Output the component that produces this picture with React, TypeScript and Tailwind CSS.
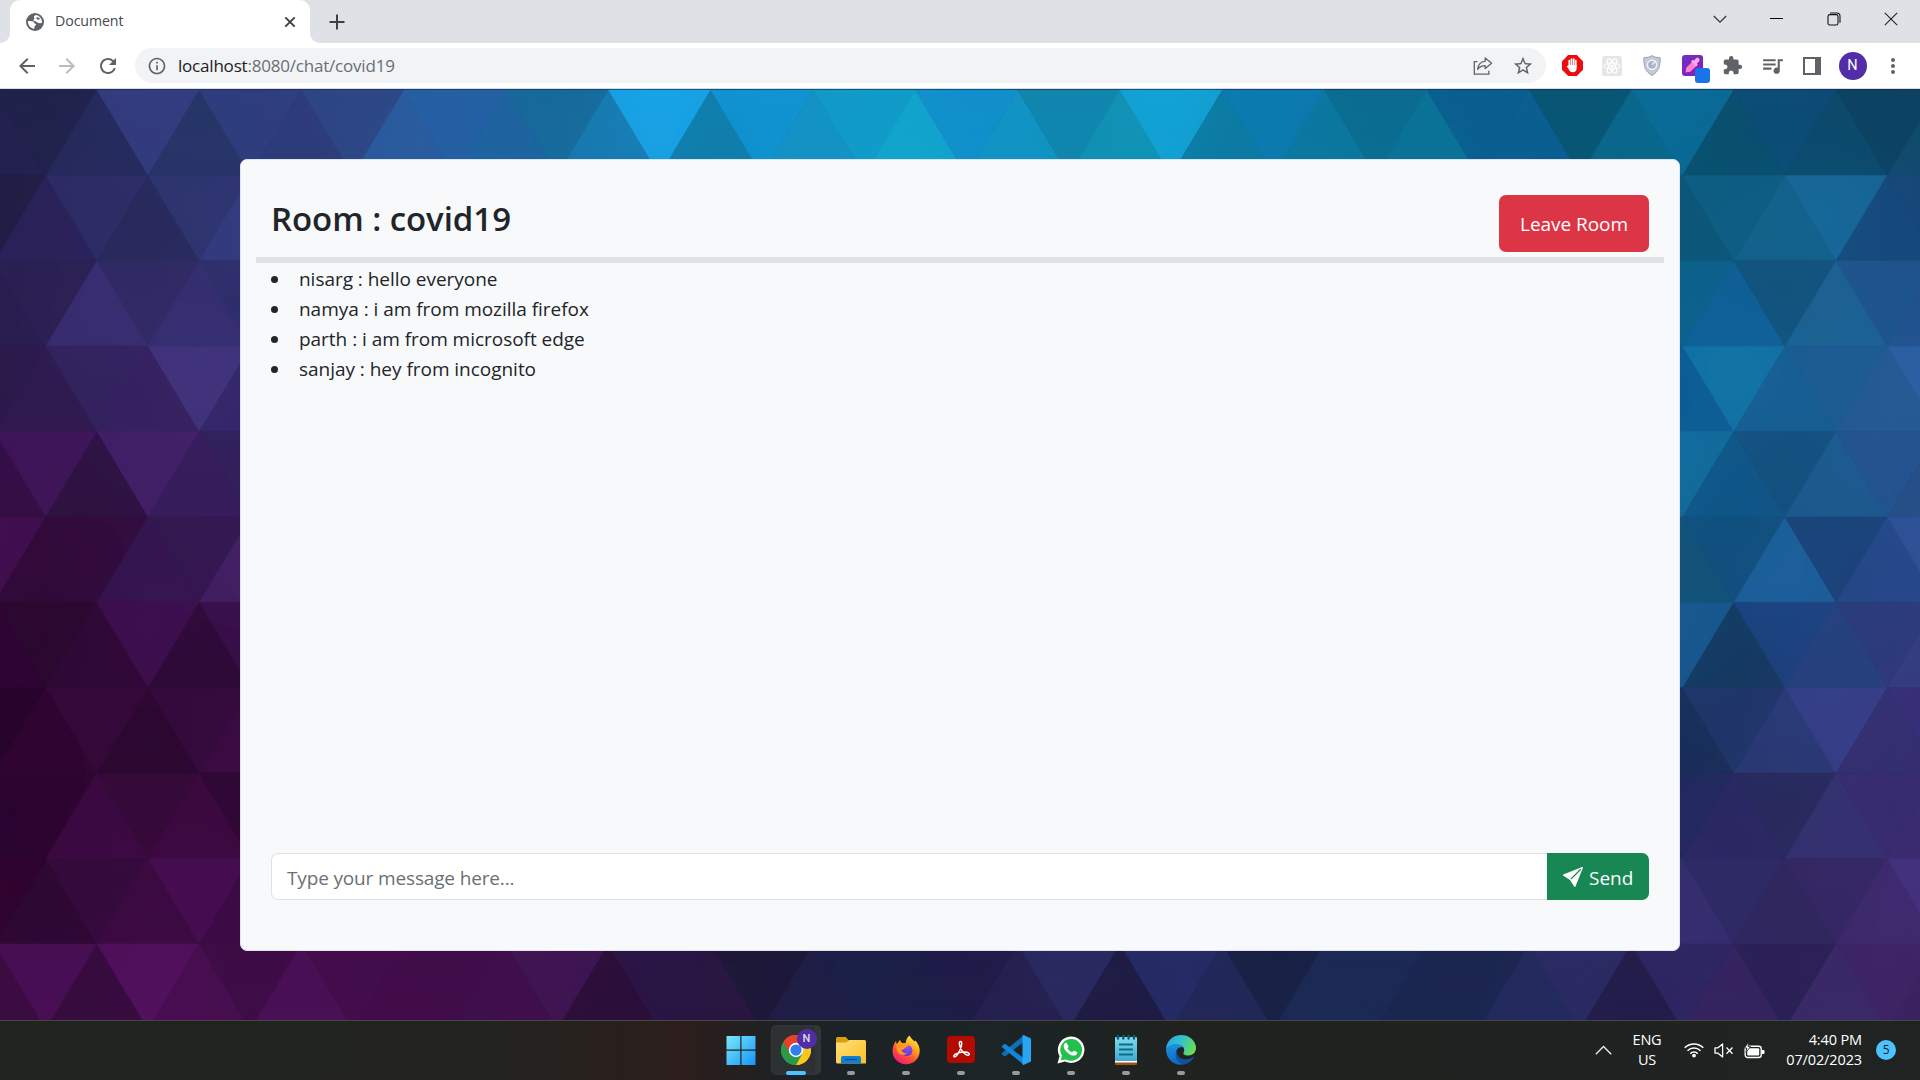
import React from "react";
import {
  MdArrowBack,
  MdArrowForward,
  MdRefresh,
  MdStarBorder,
  MdExtension,
  MdQueueMusic,
  MdMoreVert,
  MdInfoOutline,
} from "react-icons/md";
import { BsSendFill } from "react-icons/bs";

const FONT = "font-['Segoe_UI','Open_Sans','Noto_Sans',sans-serif]";

/* ---------- Triangle wallpaper ---------- */

const STEP_X = 51.15;
const ROW_H = 85.4;

type Run = { row: number; from: number; colors: string };

const RUNS: Run[] = [
  {
    row: 0,
    from: -1,
    colors:
      "23214f 20224b 252a5c 343d80 263466 2f3e7e 2e3b7a 2d4685 2a5c9f 2560a4 1f64a0 176a9b 177ab0 18a4e8 107ca8 1193d2 1592c4 119bc8 12a5cd 118fcc 1294c4 1085ad 1192b4 12a3d5 0c7aa2 0b7ab0 0b78a0 0a6c90 0a7398 085f90 0a5f92 075573 09688c 096c99 084e6c 0b4c76 0c4a6c 0c4261 114c6e",
  },
  { row: 1, from: -1, colors: "201d44 2a2259 2e2d68 28295b 2e3570 343d80 343d80" },
  { row: 1, from: 31, colors: "0d5c80 0b5678 0e5e85 13638c 166a9c 17487b 16477a" },
  { row: 2, from: -1, colors: "291d50 2b2052 3a2e74 302b64 352f72 2f2f6c 2f2f6c" },
  { row: 2, from: 31, colors: "0c628c 0c628c 10609a 12527c 1c6394 1f548c 22528f" },
  { row: 3, from: -1, colors: "2c1a4b 2f1a4d 33235f 36205f 42357f 33286a 33286a" },
  { row: 3, from: 31, colors: "0c5c94 0c5c94 1276a8 165f94 1c5c92 255a94 2c60a5" },
  { row: 4, from: -1, colors: "340f45 40155a 2c123f 43206a 371c5c 30205a 30205a" },
  { row: 4, from: 31, colors: "126e9e 126e9e 105688 14507e 1d5c90 245490 264e86" },
  { row: 5, from: -1, colors: "420f50 300a38 320b3c 361551 33184f 452066 452066" },
  { row: 5, from: 31, colors: "125278 125278 114f7e 1d629e 1a4278 25488a 305298" },
  { row: 6, from: -1, colors: "2e0634 2b072e 2f0837 3f0f50 2d0a37 380f4a 380f4a" },
  { row: 6, from: 31, colors: "195a92 195a92 14395f 1c4280 26427e 2d3a7a 353e80" },
  { row: 7, from: -1, colors: "27062b 300630 35093a 2b0730 350a3d 3b0b42 3b0b42" },
  { row: 7, from: 31, colors: "182f58 182f58 20366a 2a3a76 36408a 342f70 372e78" },
  { row: 8, from: -1, colors: "2a0630 2c062f 3d0943 350838 3d0940 2e0735 2e0735" },
  { row: 8, from: 31, colors: "22295e 22295e 2c2864 282a5c 353272 382c70 3a2c70" },
  { row: 9, from: -1, colors: "30052f 2c0731 340a3c 3b0a40 470d52 3b0b44 3b0b44" },
  { row: 9, from: 31, colors: "352e70 352e70 2d2b66 30285f 352863 3e2b6e 45327f" },
  {
    row: 10,
    from: -1,
    colors:
      "3a0b40 4a0f56 350b3c 53115f 470d50 3d0c45 4a1056 430d4c 420c4a 400d4a 3f0f4c 3f1653 2b0f38 2a1646 2a1642 1d1838 1f1e46 1b2048 1d1f47 1f1c48 25204f 2a2a62 1e1b42 252c66 222858 182044 1c2a56 1b2a55 1a2650 1b2650 232a5e 2c2b64 221c48 2e2663 35245f 2a2055 3b2a68 3e2565 3a2360",
  },
];

function triangles() {
  return RUNS.flatMap((run) =>
    run.colors.split(" ").map((c, n) => {
      const j = run.from + n;
      const cx = 45.9 + STEP_X * j;
      const top = 1 + ROW_H * run.row;
      const bottom = top + ROW_H;
      const down = (run.row + j) % 2 === 0;
      const base = down ? top : bottom;
      const tip = down ? bottom : top;
      return (
        <polygon
          key={`${run.row}:${j}`}
          points={`${cx - STEP_X},${base} ${cx + STEP_X},${base} ${cx},${tip}`}
          fill={`#${c}`}
          stroke={`#${c}`}
          strokeWidth="0.6"
        />
      );
    })
  );
}

function Wallpaper() {
  return (
    <svg className="absolute inset-0 h-full w-full" viewBox="0 0 1920 931" preserveAspectRatio="none">
      <defs>
        <filter id="soft" x="-5%" y="-5%" width="110%" height="110%">
          <feGaussianBlur stdDeviation="30" />
        </filter>
      </defs>
      <rect width="1920" height="931" fill="#1c2a56" />
      <g>{triangles()}</g>
      <g filter="url(#soft)" opacity="0.22">
        {triangles()}
      </g>
    </svg>
  );
}

/* ---------- Browser chrome ---------- */

function Cell({ children, className = "w-10" }: { children: React.ReactNode; className?: string }) {
  return <div className={`flex h-full shrink-0 items-center justify-center ${className}`}>{children}</div>;
}

function GlobeIcon() {
  return (
    <svg className="size-[18px]" viewBox="0 0 18 18">
      <circle cx="9" cy="9" r="9" fill="#5f6368" />
      <path
        d="M1.900 8.300c1.800-.5 4-.4 5.300.3 1 .6.7 1.500 1.500 2 .8.500 1.500.3 1.400 1.100-.1.900-1.400.8-1.600 1.700-.2.900-.1 1.700-.3 2.500C4.500 15.600 1.800 12.300 1.900 8.300z"
        fill="#fff"
      />
      <path
        d="M9.700 2c-.8.700-1.800 1-1.800 1.900 0 .8.700.9.600 1.600-.1.700-1 .9-1 1.700 0 .9 1 .9 1.900 1 1 .1 1 1.200 2 1.400 1.200.200 1.600.8 2.700.7.700 0 1.300-.4 2-.5.100-4-2.500-7.300-6.400-7.800z"
        fill="#fff"
      />
      <path d="M10.500 4.200c1.400-.2 2.900.5 3.600 1.700-.8.400-1.500.9-2.500.7-.9-.3-1.500-1.300-1.100-2.400z" fill="#5f6368" />
    </svg>
  );
}

function TabStrip() {
  return (
    <div className="flex h-[43px] bg-[#dee1e6]">
      <div className="w-[10px] bg-white">
        <div className="h-full rounded-br-[10px] bg-[#dee1e6]" />
      </div>
      <div className="flex w-[300px] items-center rounded-t-[10px] bg-white pl-[16px] pr-[13px]">
        <GlobeIcon />
        <span className="ml-[11px] mt-[-2px] flex-1 text-[14.2px] tracking-[-0.1px] text-[#45494d]">Document</span>
        <svg className="size-[14px]" viewBox="0 0 14 14" stroke="#3c4043" strokeWidth="1.9">
          <path d="M2.3 2.3l9.4 9.4M11.7 2.3L2.3 11.7" />
        </svg>
      </div>
      <div className="w-[10px] bg-white">
        <div className="h-full rounded-bl-[10px] bg-[#dee1e6]" />
      </div>
      <div className="flex w-[34px] items-center justify-center">
        <svg className="size-[16px]" viewBox="0 0 16 16" stroke="#3c4043" strokeWidth="2">
          <path d="M8 .5v15M.5 8h15" />
        </svg>
      </div>
      <div className="flex-1" />
      <div className="flex h-[37px] items-center">
        <Cell className="w-[57px]">
          <svg className="size-[14px]" viewBox="0 0 14 14" fill="none" stroke="#333" strokeWidth="1.2">
            <path d="M.8 4l6.2 6.2L13.2 4" />
          </svg>
        </Cell>
        <Cell className="w-[57px]">
          <div className="h-px w-[13px] bg-black" />
        </Cell>
        <Cell className="w-[57px]">
          <svg className="size-[14px]" viewBox="0 0 14 14" fill="none" stroke="#111" strokeWidth="1.1">
            <rect x="1" y="2.6" width="10" height="10.4" rx="1.8" />
            <path d="M3 1h6.8a3.2 3.2 0 0 1 3.2 3.2v6.6" />
          </svg>
        </Cell>
        <Cell className="w-[58px]">
          <svg className="size-[14px]" viewBox="0 0 14 14" stroke="#222" strokeWidth="1.1">
            <path d="M.8.8l12.4 12.4M13.2.8L.8 13.2" />
          </svg>
        </Cell>
      </div>
    </div>
  );
}

function Toolbar() {
  return (
    <div className="flex h-[45px] items-center bg-white pl-[7px] pr-[7px]">
      <Cell><MdArrowBack className="size-[24px] text-[#5f6368]" /></Cell>
      <Cell><MdArrowForward className="size-[24px] text-[#babcbe]" /></Cell>
      <Cell><MdRefresh className="ml-[1px] size-[24px] text-[#5f6368]" /></Cell>
      <div className="ml-2 mr-[7px] flex h-[35px] flex-1 items-center rounded-full bg-[#f1f3f4] pr-[3px]">
        <Cell className="w-[43px]"><MdInfoOutline className="ml-[1px] size-[20px] text-[#5f6368]" /></Cell>
        <span className="flex-1 text-[17px] tracking-[-0.2px] text-[#6a6e72]">
          <span className="text-[#202124]">localhost</span>:8080/chat/covid19
        </span>
        <Cell>
          <svg className="size-[20px]" viewBox="0 0 20 20" fill="none" stroke="#5f6368" strokeWidth="1.3">
            <path d="M4.4 5.6H1.3v12.6h14.5v-3.4" />
            <path d="M12.2 2l6.4 5.2-6.4 5.3V9.6c-3.2 0-5.6 1-7.6 3.8.5-4.300 2.600-7.600 7.600-8.300z" strokeLinejoin="round" />
          </svg>
        </Cell>
        <Cell><MdStarBorder className="size-[22px] text-[#5f6368]" /></Cell>
      </div>
      <Cell className="w-[39px]">
        <svg className="size-[21px]" viewBox="0 0 21 21">
          <path d="M6.200 0h8.600L21 6.200v8.600L14.800 21H6.200L0 14.800V6.200z" fill="#ec0d10" />
          <g stroke="#fff" strokeWidth="1.700" strokeLinecap="round">
            <path d="M7.300 11V5.700M9.500 10V4.200M11.700 10V4.200M13.800 11V5.700" />
          </g>
          <path d="M6.450 10h8.200v3.200c0 2.400-1.500 4.100-3.800 4.100-1.900 0-3-.8-3.700-2.200L4.700 11.200c.5-.8 1.300-.6 1.750 0z" fill="#fff" />
        </svg>
      </Cell>
      <Cell>
        <svg className="size-[20px]" viewBox="0 0 20 20" fill="none">
          <rect width="20" height="20" rx="2" fill="#e6e6e6" />
          <g stroke="#fff" strokeWidth="1">
            <ellipse cx="10" cy="10" rx="8" ry="3" />
            <ellipse cx="10" cy="10" rx="8" ry="3" transform="rotate(60 10 10)" />
            <ellipse cx="10" cy="10" rx="8" ry="3" transform="rotate(120 10 10)" />
          </g>
          <circle cx="10" cy="10" r="1.600" fill="#fff" />
        </svg>
      </Cell>
      <Cell>
        <svg className="h-[21px] w-[18px]" viewBox="0 0 18 21">
          <path d="M9 .6c2.300 1.500 5.200 2.100 8.200 2.200.3 8.200-1.600 14.200-8.200 17.600C2.400 17 .5 11 .8 2.800 3.800 2.700 6.700 2.100 9 .6z" fill="#c3cad6" stroke="#98a4b6" />
          <circle cx="9" cy="9.800" r="4.600" fill="#a9b4c6" stroke="#eef1f6" strokeWidth="1.500" />
          <path d="M9 9.800l3.500-3.500" stroke="#eef1f6" strokeWidth="1.500" />
        </svg>
      </Cell>
      <Cell>
        <div className="relative size-[21px]">
          <svg className="size-[21px]" viewBox="0 0 21 21">
            <defs>
              <linearGradient id="dropper" x1="0" y1="0" x2="1" y2="1">
                <stop offset="0" stopColor="#6d2fc4" />
                <stop offset="1" stopColor="#8a1fb0" />
              </linearGradient>
            </defs>
            <rect width="21" height="21" rx="3" fill="url(#dropper)" />
            <path d="M3.500 17.500l.8-4.800 5.700-5.700 4.200 4.200-5.900 5.600z" fill="#ff7fd6" />
            <path d="M9 6.500l1.800-1.800 1.400.8 1.800-2.200c2-1.500 4.500 1 3.200 3l-2.200 2.200.8 1.500-1.800 1.500z" fill="#ffa8e6" />
          </svg>
          <div className="absolute left-[13px] top-[13px] size-[15px] rounded-[3px] bg-[#1a73e8]" />
        </div>
      </Cell>
      <Cell><MdExtension className="size-[21px] text-[#5f6368]" /></Cell>
      <Cell><MdQueueMusic className="size-[25px] text-[#5f6368]" /></Cell>
      <Cell>
        <div className="h-[18px] w-[18px] border-2 border-r-[6px] border-[#5f6368]" />
      </Cell>
      <Cell className="w-[41px]">
        <div className="flex size-[28px] items-center justify-center rounded-full bg-[#512da8] font-[Roboto] text-[14.500px] text-white">
          N
        </div>
      </Cell>
      <Cell><MdMoreVert className="size-[24px] text-[#5f6368]" /></Cell>
    </div>
  );
}

/* ---------- Chat page ---------- */

const MESSAGES = [
  { text: "nisarg : hello everyone" },
  { text: "namya : i am from mozilla firefox" },
  { text: "parth : i am from microsoft edge" },
  { text: "sanjay : hey from incognito" },
];

function ChatCard() {
  return (
    <div className="relative flex h-[792px] w-[1440px] flex-col rounded-[7px] border border-[#dfe3ea] bg-[#f8f9fb] px-[15px]">
      <div className="flex h-[103px] items-start justify-between border-b-6 border-[#dee2e6] pl-[15px] pr-[15px]">
        <h3 className="mt-[35px] text-[33px] font-semibold leading-[48px] tracking-[-0.050px] text-[#212529]">
          Room : covid19
        </h3>
        <button className="mt-[35px] h-[57px] w-[150px] rounded-[7px] bg-[#dc3545] pt-[2px] text-[19px] tracking-[-0.050px] text-white">
          Leave Room
        </button>
      </div>
      <ul className="flex-1 pl-[15px] text-[19px] leading-[30px] tracking-[-0.030px] text-[#212529]">
        {MESSAGES.map((m) => (
          <li key={m.text} className="flex h-[30px] items-center">
            <span className="mr-[21px] mt-[2px] size-[7px] rounded-full bg-[#212529]" />
            <span className="pt-[2px]">{m.text}</span>
          </li>
        ))}
      </ul>
      <div className="mb-[50px] ml-[15px] mr-[15px] flex h-[47px]">
        <div className="flex flex-1 items-center rounded-l-[7px] border border-r-0 border-[#dee2e6] bg-white pl-[15px] pt-[4px] text-[19px] tracking-[-0.150px] text-[#6c7075]">
          Type your message here...
        </div>
        <button className="flex w-[102px] items-center rounded-r-[7px] bg-[#198754] pl-[16px] text-[19px] text-white">
          <BsSendFill className="mr-[6px] size-[20px]" />
          <span className="pt-[3px]">Send</span>
        </button>
      </div>
    </div>
  );
}

/* ---------- Taskbar ---------- */

function WindowsIcon() {
  return (
    <svg className="size-[30px]" viewBox="0 0 30 30">
      <defs>
        <linearGradient id="win" gradientUnits="userSpaceOnUse" x1="0" y1="0" x2="30" y2="30">
          <stop offset="0" stopColor="#7eeafc" />
          <stop offset="1" stopColor="#1294f6" />
        </linearGradient>
      </defs>
      <path d="M.5 1.500a.5.500 0 0 1 .5-.5h13.300v13.500H.5zM15.500 1H29a.5.500 0 0 1 .5.500v13h-14zM.5 15.700h13.800V30H1a.5.500 0 0 1-.5-.5zM15.500 15.700h14v13.800a.5.500 0 0 1-.5.500H15.500z" fill="url(#win)" />
    </svg>
  );
}

function ChromeIcon() {
  return (
    <div className="relative size-[30px]">
      <svg className="size-[30px]" viewBox="0 0 48 48">
        <path d="M24 24L3.200 12A24 24 0 0 1 44.800 12z" fill="#e8402f" />
        <path d="M24 24L44.800 12A24 24 0 0 1 24 48z" fill="#fcc61d" />
        <path d="M24 24L24 48A24 24 0 0 1 3.200 12z" fill="#2b9a48" />
        <path d="M24 13h20.200l.6-1A24 24 0 0 0 3.200 12l11.300 17.500z" fill="#e8402f" />
        <path d="M33.500 29.500L24 48A24 24 0 0 0 45.200 13H24z" fill="#fcc61d" />
        <path d="M14.500 29.500L3.600 11.400A24 24 0 0 0 24 48l10.200-18z" fill="#2b9a48" />
        <circle cx="24" cy="24" r="11.500" fill="#fff" />
        <circle cx="24" cy="24" r="9" fill="#2f7ef0" />
      </svg>
      <div className="absolute left-[16px] top-[-6px] flex size-[20px] items-center justify-center rounded-full bg-[#512da8] font-[Roboto] text-[11px] font-medium text-[#ddd]">
        N
      </div>
    </div>
  );
}

function FolderIcon() {
  return (
    <svg className="size-[30px]" viewBox="0 0 30 30">
      <defs>
        <linearGradient id="folder" x1="0" y1="0" x2="1" y2="1">
          <stop offset="0" stopColor="#ffe07a" />
          <stop offset="1" stopColor="#fcbf26" />
        </linearGradient>
      </defs>
      <path d="M0 3.500A1.500 1.500 0 0 1 1.500 2h8.300l3 3.500V12H0z" fill="#dd9c0c" />
      <path d="M0 7.500h10.500L13 5h15.500A1.500 1.500 0 0 1 30 6.500v22H1.500A1.500 1.500 0 0 1 0 27z" fill="url(#folder)" />
      <path d="M5 28.500V23a2 2 0 0 1 2-2h16a2 2 0 0 1 2 2v5.500z" fill="#0f7fd0" />
      <path d="M9 24.500h12" stroke="#0b4f8c" strokeWidth="1.400" />
    </svg>
  );
}

function FirefoxIcon() {
  return (
    <svg className="size-[30px]" viewBox="0 0 30 30">
      <defs>
        <linearGradient id="fox" x1="0.800" y1="0" x2="0.200" y2="1">
          <stop offset="0" stopColor="#fff14a" />
          <stop offset="0.350" stopColor="#ffa51e" />
          <stop offset="0.650" stopColor="#ff5037" />
          <stop offset="1" stopColor="#f0127c" />
        </linearGradient>
        <radialGradient id="foxcore" cx="0.600" cy="0.200" r="0.800">
          <stop offset="0" stopColor="#9a4bf5" />
          <stop offset="1" stopColor="#5b3bd0" />
        </radialGradient>
      </defs>
      <path d="M18.500.5c1 2.500 3.500 4.200 5 6l1-1c3 3.500 4.500 7.500 4.200 11C28.200 24 22.500 29.200 15.200 29.200 7.500 29.200 1.500 23.500 1.500 16c0-4 1.500-7.500 3.500-10l.6 3C7 7.500 8 7 8.500 4.800l2.800 3.400c1.200-.3 2.300-.3 3.200 0 .5-3 1.500-6 4-7.700z" fill="url(#fox)" />
      <circle cx="15.800" cy="15.500" r="5.600" fill="url(#foxcore)" />
      <path d="M5.500 9.500c3-2 6.500-1.800 8.500.2l3.500.6c-.5 1.700-2.500 2-3.500 2.600-1 .8-1.500 2.200-3.800 1.800.5 2.500 3.300 4 6.300 3.300-2.500 2.800-8 2.300-10-1.500-1-2-1.200-4.500-1-7z" fill="#ff9a1c" />
    </svg>
  );
}

function AcrobatIcon() {
  return (
    <svg className="size-[28px]" viewBox="0 0 28 28">
      <rect width="28" height="27" rx="4" fill="#b30b00" />
      <path
        d="M13.500 5.500c-2 0-1.300 4 .8 8 2 3.700 5.300 6.300 7.300 5.500 1.800-.9.300-3.200-5-2.900-5.500.4-10.200 2.300-9.800 4.200.6 1.800 3.800-.7 6-5.800 2-4.800 2.700-9 .7-9z"
        fill="none"
        stroke="#fff"
        strokeWidth="1.500"
      />
    </svg>
  );
}

function CodeIcon() {
  return (
    <svg className="size-[30px]" viewBox="0 0 30 30">
      <path d="M1 19.200l2 1.800c.5.400 1.200.400 1.700 0L22.500 7V.5L1 18c-.4.300-.4.900 0 1.200z" fill="#0c6fb8" />
      <path d="M1 11l2-1.800c.5-.4 1.200-.4 1.700 0L22.500 23v6.500L1 12.200c-.4-.3-.4-.9 0-1.200z" fill="#0f86d6" />
      <path d="M22.500 0L30 3.500v23L22.500 30c-.6 0-1-.3-1-.8V.8c0-.5.4-.8 1-.8z" fill="#2aa5f3" />
    </svg>
  );
}

function WhatsAppIcon() {
  return (
    <svg className="size-[30px]" viewBox="0 0 30 30">
      <path d="M1.500 28.500l2-7.200A13.300 13.300 0 1 1 9 26.600z" fill="#fff" />
      <path d="M4.700 25.300l1.300-4.600a10.900 10.900 0 1 1 4.100 3.800z" fill="#22c04c" />
      <path d="M10.800 8.300c-.4-.8-1.300-.7-1.900-.1-2.500 2.700-.8 6.200 2.200 9 3 2.900 6.400 4.300 8.900 2.700 1.100-.8 1.500-2.200 1.100-2.700l-3-1.500c-.9-.3-1.200.9-1.900 1.500-1.800-.3-4-2.200-4.700-4 .5-.7 1.300-1.300 1-1.900z" fill="#fff" />
    </svg>
  );
}

function NotepadIcon() {
  return (
    <svg className="h-[30px] w-[22px]" viewBox="0 0 22 30">
      <defs>
        <linearGradient id="pad" x1="0" y1="0" x2="0" y2="1">
          <stop offset="0" stopColor="#7fdcec" />
          <stop offset="1" stopColor="#3fa9cf" />
        </linearGradient>
      </defs>
      <rect y="25" width="22" height="5" rx="1" fill="#a5500f" />
      <rect y="24" width="22" height="3.500" fill="#fff" />
      <rect y="2" width="22" height="24" rx="1" fill="url(#pad)" />
      <path d="M3 0v3.500M8.300 0v3.500M13.600 0v3.500M19 0v3.500" stroke="#0c5c78" strokeWidth="2.400" strokeLinecap="round" />
      <path d="M4 9.500h14M4 14.500h14M4 19.500h14" stroke="#106a8a" strokeWidth="1.800" />
    </svg>
  );
}

function EdgeIcon() {
  return (
    <svg className="size-[30px]" viewBox="0 0 30 30">
      <defs>
        <linearGradient id="edgeTop" x1="0" y1="0.300" x2="1" y2="0.600">
          <stop offset="0" stopColor="#2aa6e8" />
          <stop offset="0.500" stopColor="#36c3c6" />
          <stop offset="1" stopColor="#6be04a" />
        </linearGradient>
        <linearGradient id="edgeLeft" x1="0" y1="0" x2="0" y2="1">
          <stop offset="0" stopColor="#1b93e0" />
          <stop offset="1" stopColor="#0b67c2" />
        </linearGradient>
      </defs>
      <path d="M0 14C.5 6 7 0 15 0c9 0 15 6.500 15 12.800 0 5-3.500 7.700-7.700 7.700-4.600 0-5.300-2-4.700-3 1.500-2.800.5-7-5-7.500C7 9.600 2 11.500 0 14z" fill="url(#edgeTop)" />
      <path d="M0 14.500c1.500-4 6.500-6 11.500-5.500 3 .3 5 1.800 5.800 3.600-4.300-1.800-8 1.900-7.300 6.900.7 5 4.500 8.500 9 9.500C9 32.200 0 24.500 0 14.500z" fill="url(#edgeLeft)" />
      <path d="M12 14.500c-2.300 4 .5 9.500 6.500 9.700 3.500.2 6.300-.8 8.500-2.200.8-.3 1.200.2.800.8-2.600 4-6.300 6.500-9.800 6.500C10.500 28.500 7 19 12 14.500z" fill="#124f9c" />
    </svg>
  );
}

const APPS = [WindowsIcon, ChromeIcon, FolderIcon, FirefoxIcon, AcrobatIcon, CodeIcon, WhatsAppIcon, NotepadIcon, EdgeIcon];

function Taskbar() {
  return (
    <div className="flex h-[60px] border-t border-[#454744] bg-[linear-gradient(90deg,#20231f_0%,#22231f_25%,#2c1e1c_36%,#1c2225_41%,#1b2426_52%,#20221f_62%,#1f2322_100%)] text-white">
      <div className="w-[713px]" />
      {APPS.map((Icon, i) => (
        <div key={i} className="flex w-[55px] flex-col items-center">
          <div
            className={
              i === 1
                ? "mt-1 flex h-[50px] w-[50px] items-center justify-center rounded-[5px] border border-r-[6px] border-[#333636] bg-[#2d3131] pl-[5px]"
                : "mt-1 flex h-[50px] w-[50px] items-center justify-center"
            }
          >
            <Icon />
          </div>
          {i === 1 && <div className="mt-[-4px] h-1 w-5 rounded-full bg-[#4cc2ff]" />}
          {i > 1 && <div className="mt-[-4px] h-1 w-2 rounded-full bg-[#9a9a9a]" />}
        </div>
      ))}
      <div className="flex flex-1 items-center justify-end pb-[1px] text-[14.500px] leading-[20px] tracking-[-0.200px]">
        <svg className="size-[17px]" viewBox="0 0 17 17" fill="none" stroke="#eee" strokeWidth="1.300">
          <path d="M.8 12.200l7.700-7.700 7.700 7.700" />
        </svg>
        <div className="ml-[13px] w-[44px] text-center">
          ENG
          <br />
          US
        </div>
        <svg className="ml-[15px] h-[16px] w-[20px]" viewBox="0 0 20 16" fill="none" stroke="#fff" strokeWidth="1.500">
          <path d="M.7 5.800a13.200 13.200 0 0 1 18.600 0M3.500 8.800a9.200 9.200 0 0 1 13 0M6.300 11.600a5.200 5.200 0 0 1 7.400 0" />
          <circle cx="10" cy="13.600" r="1.900" fill="#fff" stroke="none" />
        </svg>
        <svg className="ml-[10px] h-[15px] w-[20px]" viewBox="0 0 20 15" fill="none" stroke="#fff" strokeWidth="1.300">
          <path d="M1 4.800h3L8.600 1v13L4 10.200H1z" strokeLinejoin="round" />
          <path d="M12.500 4.500l6 6.200M18.500 4.500l-6 6.200" />
        </svg>
        <svg className="ml-[10px] h-[17px] w-[21px]" viewBox="0 0 21 17">
          <rect x="1.200" y="4.200" width="16" height="11.300" rx="2.500" fill="none" stroke="#fff" strokeWidth="1.400" />
          <rect x="3.200" y="6.200" width="12" height="7.300" rx="1" fill="#fff" />
          <path d="M18 8h1.500a1 1 0 0 1 1 1v2a1 1 0 0 1-1 1H18z" fill="#fff" />
          <path d="M4.500 0L.5 6h2.300L2 10.500 6.500 4.500H4z" fill="#fff" stroke="#1f2322" strokeWidth="0.800" />
        </svg>
        <div className="ml-[13px] w-[84px] text-right tracking-[-0.120px]">
          4:40 PM
          <br />
          07/02/2023
        </div>
        <div className="ml-[14px] mr-[24px] flex size-[20px] items-center justify-center rounded-full bg-[#4cc2ff] text-[12px] text-[#10222c]">
          5
        </div>
      </div>
    </div>
  );
}

export default function App() {
  return (
    <div className={`flex h-[1080px] w-[1920px] flex-col overflow-hidden ${FONT}`}>
      <TabStrip />
      <Toolbar />
      <main className="relative flex flex-1 justify-center overflow-hidden border-t border-[#d5dcdc] pt-[70px]">
        <Wallpaper />
        <ChatCard />
      </main>
      <Taskbar />
    </div>
  );
}
